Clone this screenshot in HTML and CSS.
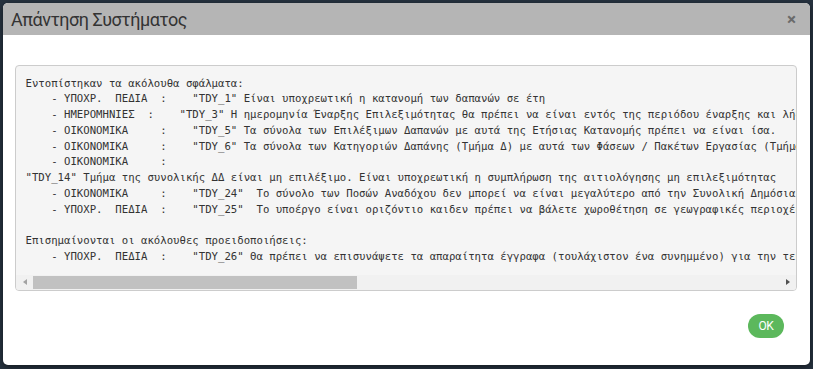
FILE: index.html
```html
<!DOCTYPE html>
<html lang="el">
<head>
<meta charset="utf-8">
<title>Απάντηση Συστήματος</title>
<link rel="stylesheet" href="styles.css">
</head>
<body>
<div class="page">
  <div class="modal">
    <div class="modal-header">
      <h4 class="modal-title">Απάντηση Συστήματος</h4>
      <span class="close">×</span>
    </div>
    <div class="modal-body">
      <div class="pre-box">
<pre class="pre-text">Εντοπίστηκαν τα ακόλουθα σφάλματα:
    - ΥΠΟΧΡ.  ΠΕΔΙΑ  :    "TDY_1" Είναι υποχρεωτική η κατανομή των δαπανών σε έτη
    - ΗΜΕΡΟΜΗΝΙΕΣ  :    "TDY_3" Η ημερομηνία Έναρξης Επιλεξιμότητας θα πρέπει να είναι εντός της περιόδου έναρξης και λήξης του έργου
    - ΟΙΚΟΝΟΜΙΚΑ     :    "TDY_5" Τα σύνολα των Επιλέξιμων Δαπανών με αυτά της Ετήσιας Κατανομής πρέπει να είναι ίσα.
    - ΟΙΚΟΝΟΜΙΚΑ     :    "TDY_6" Τα σύνολα των Κατηγοριών Δαπάνης (Τμήμα Δ) με αυτά των Φάσεων / Πακέτων Εργασίας (Τμήμα Ε) πρέπει να είναι ίσα.
    - ΟΙΚΟΝΟΜΙΚΑ     :
"TDY_14" Τμήμα της συνολικής ΔΔ είναι μη επιλέξιμο. Είναι υποχρεωτική η συμπλήρωση της αιτιολόγησης μη επιλεξιμότητας
    - ΟΙΚΟΝΟΜΙΚΑ     :    "TDY_24"  Το σύνολο των Ποσών Αναδόχου δεν μπορεί να είναι μεγαλύτερο από την Συνολική Δημόσια Δαπάνη
    - ΥΠΟΧΡ.  ΠΕΔΙΑ  :    "TDY_25"  Το υποέργο είναι οριζόντιο καιδεν πρέπει να βάλετε χωροθέτηση σε γεωγραφικές περιοχές

Επισημαίνονται οι ακόλουθες προειδοποιήσεις:
    - ΥΠΟΧΡ.  ΠΕΔΙΑ  :    "TDY_26" Θα πρέπει να επισυνάψετε τα απαραίτητα έγγραφα (τουλάχιστον ένα συνημμένο) για την τεκμηρίωση</pre>
        <div class="hscroll">
          <span class="sb-btn"><span class="tri tri-left"></span></span>
          <div class="sb-track"><div class="sb-thumb"></div></div>
          <span class="sb-btn"><span class="tri tri-right"></span></span>
        </div>
      </div>
    </div>
    <div class="modal-footer">
      <button class="btn-ok">OK</button>
    </div>
  </div>
</div>
</body>
</html>
```

FILE: styles.css
```css
html, body {
  margin: 0;
  padding: 0;
}
body {
  background: #26323f;
  width: 813px;
  height: 369px;
  overflow: hidden;
  font-family: "Roboto", "Liberation Sans", sans-serif;
}
.page {
  padding: 3px 3px 0 3px;
}
.modal {
  width: 807px;
  height: 362px;
  background: #fff;
  border-radius: 5px;
  box-shadow: 0 2px 6px rgba(0, 0, 0, 0.5);
  display: flex;
  flex-direction: column;
}
.modal-header {
  height: 32px;
  background: #b5b5b5;
  border-radius: 5px 5px 0 0;
  display: flex;
  align-items: center;
  justify-content: space-between;
  padding: 0 14px 0 8px;
}
.modal-title {
  margin: 0;
  font-family: "Roboto", "Liberation Sans", sans-serif;
  font-weight: 400;
  font-size: 18px;
  color: #333;
  letter-spacing: -0.5px;
}
.close {
  font-size: 17px;
  font-weight: 700;
  color: #6a6a6a;
  line-height: 1;
}
.modal-body {
  padding: 30px 13px 0 12px;
}
.pre-box {
  border: 1px solid #ccc;
  border-radius: 4px;
  background: #f5f5f5;
  overflow: hidden;
}
.pre-text {
  margin: 0;
  padding: 9.5px 9.5px;
  font-family: "DejaVu Sans Mono", monospace;
  font-size: 10.66px;
  line-height: 15.8px;
  color: #333;
  white-space: pre;
  overflow: hidden;
}
.hscroll {
  height: 15px;
  display: flex;
  background: #f1f1f1;
}
.sb-btn {
  width: 17px;
  display: flex;
  align-items: center;
  justify-content: center;
}
.tri {
  width: 0;
  height: 0;
  border-top: 3.5px solid transparent;
  border-bottom: 3.5px solid transparent;
}
.tri-left {
  border-right: 4px solid #a3a3a3;
}
.tri-right {
  border-left: 4px solid #505050;
}
.sb-track {
  flex: 1;
  display: flex;
  align-items: center;
}
.sb-thumb {
  width: 324px;
  height: 13px;
  background: #c1c1c1;
}
.modal-footer {
  display: flex;
  justify-content: flex-end;
  padding: 23px 26px 0 0;
}
.btn-ok {
  width: 36px;
  height: 24px;
  border: none;
  border-radius: 12px;
  background: #5cb85c;
  color: #fff;
  font-family: "Roboto", "Liberation Sans", sans-serif;
  font-size: 12px;
  padding: 0;
  letter-spacing: -0.5px;
}
```
